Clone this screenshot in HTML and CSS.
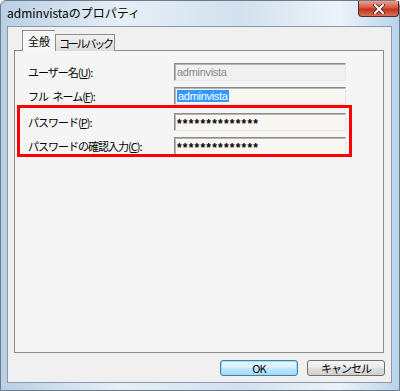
FILE: index.html
```html
<!DOCTYPE html>
<html lang="ja">
<head>
    <meta charset="UTF-8">
    <title>adminvistaのプロパティ</title>
    <link rel="stylesheet" href="styles.css">
</head>
<body>

<div class="window">
    <div class="titlebar">
        <span class="title">adminvistaのプロパティ</span>
        <button class="close-btn">
            <svg width="14" height="10" viewBox="0 0 14 10">
                <path d="M3 1 L11 9 M11 1 L3 9" stroke="#4a2020" stroke-width="3.4" stroke-linecap="square"/>
                <path d="M3 1 L11 9 M11 1 L3 9" stroke="#ffffff" stroke-width="2" stroke-linecap="square"/>
            </svg>
        </button>
    </div>

    <div class="client">
        <div class="tabs">
            <div class="tab active">全般</div>
            <div class="tab">コールバック</div>
        </div>

        <div class="panel">
            <div class="row">
                <label class="label">ユーザー名(<u>U</u>):</label>
                <div class="field disabled">adminvista</div>
            </div>
            <div class="row">
                <label class="label">フル<span class="space"> </span>ネーム(<u>F</u>):</label>
                <div class="field"><span class="selected">adminvista</span></div>
            </div>
            <div class="row row-gap">
                <label class="label">パスワード(<u>P</u>):</label>
                <div class="field password">**************</div>
            </div>
            <div class="row">
                <label class="label">パスワードの確認入力(<u>C</u>):</label>
                <div class="field password">**************</div>
            </div>

            <!-- red highlight drawn over the password rows -->
            <div class="highlight"></div>
        </div>

        <div class="buttons">
            <button class="btn default">OK</button>
            <button class="btn">キャンセル</button>
        </div>
    </div>
</div>

</body>
</html>
```

FILE: styles.css
```css
body {
    margin: 0;
    padding: 0;
    background-color: #ffffff;
    font-family: 'Noto Sans CJK JP', 'Liberation Sans', sans-serif;
}

.window {
    width: 400px;
    height: 391px;
    box-sizing: border-box;
    display: flex;
    flex-direction: column;
    padding: 0 7px 7px 6px;
    border: 1px solid #6c7a8a;
    border-radius: 6px 6px 0 0;
    background: linear-gradient(to right, #b9cfe4 0%, #e6eff7 30%, #d2e1ee 60%, #edf3f9 85%, #b8d3ea 100%);
}

.titlebar {
    height: 25px;
    flex-shrink: 0;
    display: flex;
    justify-content: space-between;
    align-items: flex-start;
}

.title {
    margin-top: 3px;
    font-size: 12px;
    letter-spacing: 0;
    color: #000000;
}

.close-btn {
    width: 41px;
    height: 16px;
    margin-right: -7px;
    padding: 0;
    border: 1px solid #5a2a22;
    border-top: none;
    border-radius: 0 0 4px 4px;
    background: linear-gradient(to bottom, #e8a190 0%, #d6563f 45%, #c0321c 55%, #d5735c 100%);
    display: flex;
    align-items: center;
    justify-content: center;
}

.client {
    flex: 1;
    display: flex;
    flex-direction: column;
    background-color: #f0f0f0;
    border: 1px solid #8a98a8;
    padding: 3px 7px 0 6px;
}

.tabs {
    display: flex;
    align-items: flex-end;
    padding-left: 8px;
    position: relative;
    z-index: 1;
    margin-bottom: -1px;
}

.tab {
    height: 16px;
    padding: 0 2px 0 3px;
    font-size: 11px;
    letter-spacing: -2.2px;
    line-height: 16px;
    border: 1px solid #8d8d8d;
    border-bottom: none;
    background: linear-gradient(to bottom, #f2f2f2, #dcdcdc);
    color: #000000;
}

.tab.active {
    height: 20px;
    width: 26px;
    padding: 0 3px;
    letter-spacing: 0;
    line-height: 20px;
    text-indent: 2px;
    background: #f7f7f7;
    border-right: none;
}

.panel {
    position: relative;
    flex-shrink: 0;
    box-sizing: border-box;
    height: 303px;
    border: 1px solid #8d8d8d;
    background-color: #f5f5f5;
    padding: 12px 0 0 13px;
    display: flex;
    flex-direction: column;
    gap: 6px;
}

.row {
    display: flex;
    align-items: center;
    height: 18px;
}

.row-gap {
    margin-top: 2px;
}

.label {
    width: 146px;
    font-size: 11px;
    letter-spacing: -1px;
    color: #000000;
}

.space {
    margin-right: 3px;
}

.field {
    width: 172px;
    height: 18px;
    box-sizing: border-box;
    padding: 1px 0 0 2px;
    font-size: 11px;
    line-height: 14px;
    font-family: 'Liberation Sans', sans-serif;
    letter-spacing: -0.3px;
    border: 1px solid;
    border-color: #8c8c8c #e6e6e6 #e9e9e9 #8c8c8c;
    box-shadow: inset 1px 1px 0 #b4b4b4;
    background-color: #faf6f2;
    color: #000000;
}

.field.disabled {
    background-color: #f0f0f0;
    color: #8a8a8a;
}

.selected {
    background-color: #3399ff;
    color: #ffffff;
    padding: 0 1px;
}

.password {
    font-size: 12px;
    font-weight: bold;
    letter-spacing: 1.2px;
    line-height: 18px;
}

.highlight {
    position: absolute;
    left: 2px;
    top: 54px;
    width: 329px;
    height: 46px;
    border: 3px solid #ff0000;
}

.buttons {
    display: flex;
    justify-content: flex-end;
    gap: 9px;
    margin-top: 7px;
    margin-right: -1px;
}

.btn {
    width: 78px;
    height: 16px;
    padding: 0;
    font-family: 'Noto Sans CJK JP', 'Liberation Sans', sans-serif;
    font-size: 11px;
    letter-spacing: -1px;
    line-height: 13px;
    border: 1px solid #707070;
    border-radius: 3px;
    background: linear-gradient(to bottom, #f4f4f4 0%, #ebebeb 45%, #dddddd 55%, #d0d0d0 100%);
    color: #000000;
}

.btn.default {
    border-color: #3c7fb1;
    box-shadow: inset 0 0 0 1px #9fdcf5;
    background: linear-gradient(to bottom, #eaf6fd 0%, #d9f0fc 45%, #bee6fd 55%, #a7d9f5 100%);
}
```
